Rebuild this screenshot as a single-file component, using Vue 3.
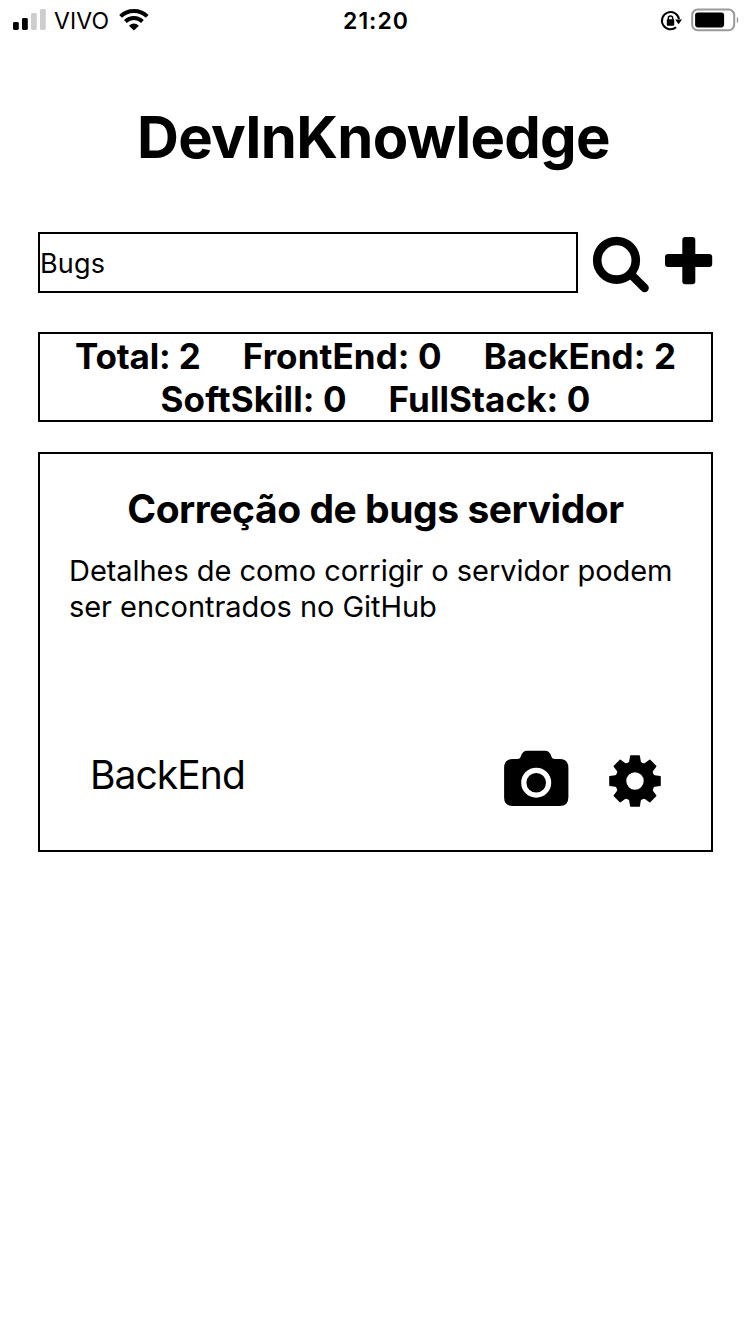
<script setup>
const search = 'Bugs'
const rows = [
  [{ label: 'Total', value: 2, tight: true }, { label: 'FrontEnd', value: 0 }, { label: 'BackEnd', value: 2 }],
  [{ label: 'SoftSkill', value: 0 }, { label: 'FullStack', value: 0 }]
]
const tip = {
  title: 'Correção de bugs servidor',
  text: 'Detalhes de como corrigir o servidor podem ser encontrados no GitHub',
  category: 'BackEnd'
}
const teeth = [0, 45, 90, 135, 180, 225, 270, 315]
</script>

<template>
  <div class="screen">
    <header class="status">
      <div class="side">
        <svg class="signal" width="34" height="22" viewBox="0 0 34 22">
          <rect x="0" y="13" width="5.8" height="8" rx="1.4" />
          <rect x="9" y="9" width="5.8" height="12" rx="1.4" />
          <g fill="#cdcdcd">
            <rect x="18" y="4" width="5.8" height="17" rx="1.4" />
            <rect x="27" y="0" width="5.8" height="21" rx="1.4" />
          </g>
        </svg>
        <span class="carrier">VIVO</span>
        <svg class="wifi" width="30" height="22" viewBox="0 0 30 22">
          <g fill="none" stroke="#000" stroke-width="4">
            <path d="M1.6 7.4A19.3 19.3 0 0 1 28.2 7.4" />
            <path d="M6.4 12.5A12.3 12.3 0 0 1 23.4 12.5" />
          </g>
          <path d="M14.9 21.6L9.9 16.7Q14.9 12.5 19.9 16.7Z" />
        </svg>
      </div>
      <span class="clock">21:20</span>
      <div class="side right">
        <svg width="22" height="22" viewBox="0 0 22 22">
          <path d="M16.1 17.3A8.6 8.6 0 1 1 19 9.1" fill="none" stroke="#000" stroke-width="2" />
          <path d="M15.2 9.4H22L18.6 14.2Z" />
          <rect x="6.8" y="9.2" width="7.4" height="6.6" rx="0.8" />
          <path d="M8.3 10V8.2a2.2 2.2 0 0 1 4.4 0V10" fill="none" stroke="#000" stroke-width="1.5" />
        </svg>
        <svg class="battery" width="49" height="24" viewBox="0 0 49 24">
          <rect x="1.2" y="1.6" width="42" height="20.6" rx="5.4" fill="none" stroke="#999" stroke-width="2" />
          <rect x="4.1" y="4.4" width="29" height="15" rx="2.8" />
          <path d="M45.8 8.4Q49 12 45.8 15.6Z" fill="#999" />
        </svg>
      </div>
    </header>

    <h1>DevInKnowledge</h1>

    <div class="search">
      <div class="field">{{ search }}</div>
      <svg class="find" width="58" height="58" viewBox="0 0 58 58">
        <circle cx="24.5" cy="25.3" r="19.3" fill="none" stroke="#000" stroke-width="8.6" />
        <path d="M39 39.5L52.6 53" stroke="#000" stroke-width="8.4" stroke-linecap="round" />
      </svg>
      <svg class="add" width="48" height="48" viewBox="0 0 48 48">
        <rect x="17.3" y="0" width="13" height="47.2" rx="3" />
        <rect x="0" y="17.1" width="47.2" height="13" rx="3" />
      </svg>
    </div>

    <section class="stats">
      <div v-for="(row, i) in rows" :key="i" class="row">
        <span v-for="s in row" :key="s.label" :class="{ tight: s.tight }">{{ s.label }}: {{ s.value }}</span>
      </div>
    </section>

    <article class="card">
      <h2>{{ tip.title }}</h2>
      <p>{{ tip.text }}</p>
      <footer>
        <span class="category">{{ tip.category }}</span>
        <svg class="camera" width="65" height="57" viewBox="0 0 65 57">
          <path d="M9 9H13.5Q16 9 16.8 6.4Q18.4 0.8 23.2 0.8H41Q45.8 0.8 47.4 6.4Q48.2 9 50.7 9H55.5Q64.4 9 64.4 18V47.2Q64.4 56.1 55.5 56.1H9Q0.1 56.1 0.1 47.2V18Q0.1 9 9 9Z" />
          <circle cx="32.2" cy="32.7" r="12.4" fill="none" stroke="#fff" stroke-width="5.2" />
        </svg>
        <svg class="gear" width="52" height="52" viewBox="-26 -26 52 52">
          <circle r="14.2" fill="none" stroke="#000" stroke-width="11" />
          <path
            v-for="a in teeth"
            :key="a"
            d="M-7.4 -17.6Q-6 -18.3 -5.8 -19.8L-4.9 -25.2Q-4.8 -25.8 -4.2 -25.8H4.2Q4.8 -25.8 4.9 -25.2L5.8 -19.8Q6 -18.3 7.4 -17.6Z"
            :transform="`rotate(${a})`"
          />
        </svg>
      </footer>
    </article>
  </div>
</template>

<style>
body {
  background: #fff;
}
</style>

<style scoped>
.screen {
  box-sizing: border-box;
  width: 750px;
  height: 1334px;
  overflow: hidden;
  background: #fff;
  color: #000;
  font-family: Inter, "Liberation Sans", sans-serif;
}
svg {
  display: block;
  flex: none;
}
.status {
  display: grid;
  grid-template-columns: 1fr auto 1fr;
  align-items: center;
  height: 41px;
  padding: 0 11px 0 13px;
}
.side {
  display: flex;
  align-items: center;
}
.right {
  justify-content: flex-end;
  margin-right: -1px;
}
.signal {
  margin-top: -1px;
}
.carrier {
  margin: 0 10px 0 7px;
  font-size: 23px;
  line-height: 40px;
  letter-spacing: 0.1px;
}
.wifi {
  margin-top: -1px;
}
.clock {
  font-size: 23px;
  font-weight: 600;
  line-height: 40px;
  letter-spacing: 1px;
}
.battery {
  margin: -2px 0 0 9px;
}
h1 {
  margin: 66px 3px 0 0;
  font-size: 58px;
  font-weight: 700;
  line-height: 60px;
  letter-spacing: -0.7px;
  text-align: center;
}
.search {
  display: flex;
  align-items: flex-start;
  margin: 65px 37px 0 38px;
}
.field {
  box-sizing: border-box;
  width: 540px;
  height: 61px;
  border: 2px solid #000;
  font-size: 27px;
  line-height: 60px;
  letter-spacing: 0.2px;
}
.find {
  margin: 3px 0 0 14px;
}
.add {
  margin: 5px 0 0 15px;
}
.stats {
  box-sizing: border-box;
  height: 90px;
  margin: 39px 37px 0 38px;
  padding-top: 1px;
  border: 2px solid #000;
}
.row {
  display: flex;
  justify-content: center;
  gap: 42px;
  height: 43px;
  font-size: 35px;
  font-weight: 700;
  line-height: 43px;
  letter-spacing: 0.08px;
}
.tight {
  letter-spacing: -0.15px;
}
.card {
  box-sizing: border-box;
  height: 400px;
  margin: 30px 37px 0 38px;
  border: 2px solid #000;
}
h2 {
  margin: 30px 0 0;
  font-size: 39px;
  font-weight: 700;
  line-height: 50px;
  letter-spacing: -0.45px;
  text-align: center;
}
p {
  height: 72px;
  margin: 19px 28px 0 29px;
  font-size: 29px;
  line-height: 36px;
  letter-spacing: -0.05px;
}
footer {
  display: flex;
  align-items: flex-start;
  margin: 125px 50px 0 50px;
}
.category {
  margin-right: auto;
  font-size: 39px;
  line-height: 50px;
  letter-spacing: -0.95px;
}
.camera {
  margin-right: 40px;
}
.gear {
  margin-top: 4.5px;
}
</style>
